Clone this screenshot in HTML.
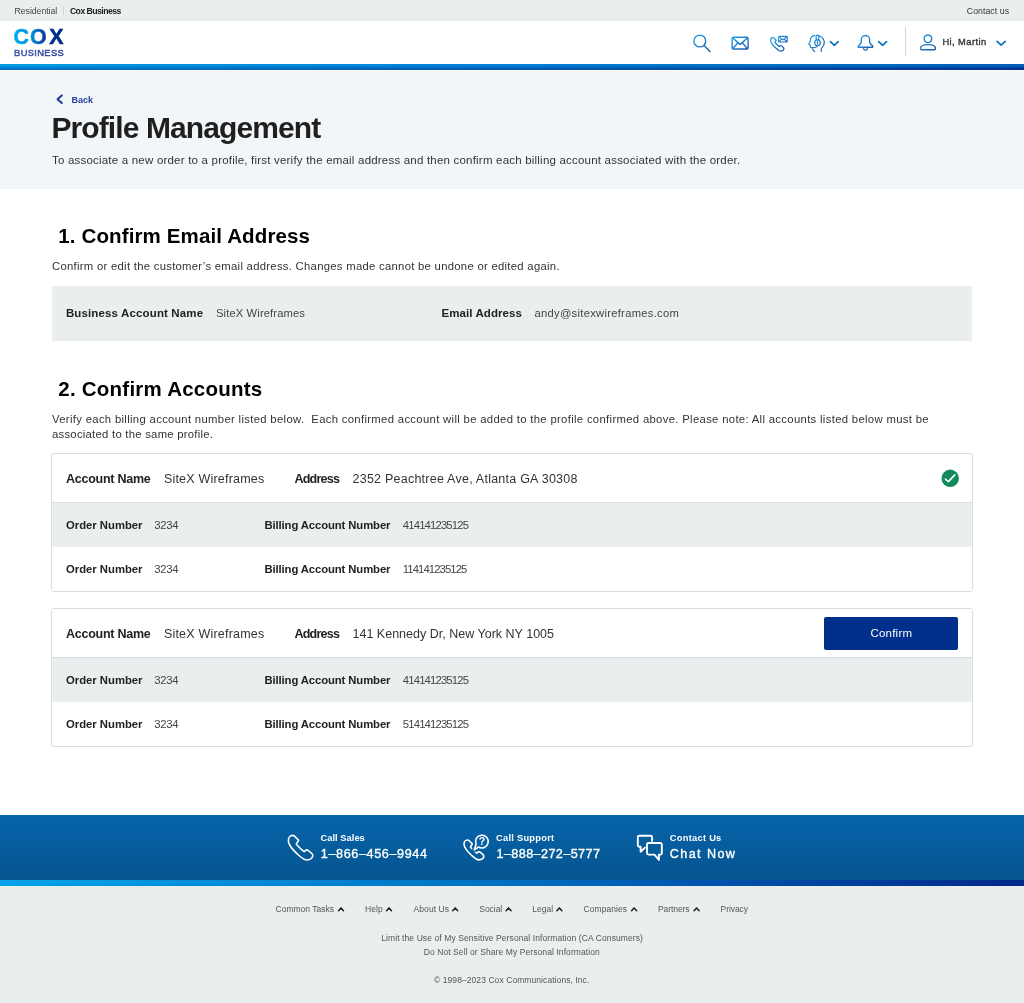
<!DOCTYPE html>
<html lang="en">
<head>
<meta charset="utf-8">
<title>Profile Management</title>
<style>
*{box-sizing:border-box;margin:0;padding:0}
html,body{width:1024px;height:1003px;overflow:hidden;background:#fff}
body{font-family:"Liberation Sans",sans-serif;color:#222;position:relative}
.t{position:absolute;white-space:nowrap;line-height:1}
#txt{position:absolute;left:0;top:0;width:1024px;height:1003px;will-change:transform}
.b{font-weight:bold}
.m{-webkit-text-stroke:.35px currentColor}
.abs{position:absolute}
#topbar{left:0;top:0;width:1024px;height:21.3px;background:#ebeeef}
#hdr{left:0;top:21px;width:1024px;height:43px;background:#fff}
#stripe1{left:0;top:64px;width:1024px;height:6px;background:linear-gradient(to right,#0071c9 0%,#0058ae 50%,#002c90 100%)}
#stripe1:before{content:"";position:absolute;left:0;top:0;width:100%;height:100%;background:linear-gradient(to right,#009ae4 0%,#0080d4 50%,#0060b8 100%);-webkit-mask-image:linear-gradient(to bottom,#000 0%,#000 25%,transparent 90%);mask-image:linear-gradient(to bottom,#000 0%,#000 25%,transparent 90%)}
#hero{left:0;top:71px;width:1024px;height:117.7px;background:#f3f6f9}
#box1{left:51.5px;top:286.3px;width:920.8px;height:54.9px;background:#ebeeef}
.card{left:51px;width:922px;height:139px;border:1px solid #d9dee3;border-radius:2.5px;background:#fff;overflow:hidden}
.card .hr{position:absolute;left:0;top:48px;width:100%;height:1px;background:#d9dee3}
.card .gr{position:absolute;left:0;top:49px;width:100%;height:44px;background:#ebeeef}
#fband{left:0;top:815px;width:1024px;height:65px;background:linear-gradient(to bottom,#0665ab,#05548e)}
#stripe2{left:0;top:880px;width:1024px;height:6.5px;background:linear-gradient(to right,#00a3ec 0%,#006fc2 50%,#00288a 100%)}
#foot{left:0;top:886px;width:1024px;height:117px;background:#ebeeef}
#btn{left:824px;top:617px;width:134.3px;height:32.5px;background:#00308c;border-radius:2px}
</style>
</head>
<body>
<div id="topbar" class="abs"></div>
<div id="hdr" class="abs"></div>
<div id="stripe1" class="abs"></div>
<div id="hero" class="abs"></div>
<div id="box1" class="abs"></div>
<div id="card1" class="abs card" style="top:453px"><div class="hr"></div><div class="gr"></div></div>
<div id="card2" class="abs card" style="top:608px"><div class="hr"></div><div class="gr"></div></div>
<div id="btn" class="abs"></div>
<div id="fband" class="abs"></div>
<div id="stripe2" class="abs"></div>
<div id="foot" class="abs"></div>
<svg class="abs" style="left:0;top:0;will-change:transform" width="1024" height="1003" viewBox="0 0 1024 1003" font-family="'Liberation Sans',sans-serif">
<defs>
<linearGradient id="lg" gradientUnits="userSpaceOnUse" x1="14" y1="0" x2="64" y2="0"><stop offset="0" stop-color="#00a9f0"/><stop offset=".33" stop-color="#0095df"/><stop offset=".62" stop-color="#0a3c9c"/><stop offset=".72" stop-color="#00308f"/><stop offset="1" stop-color="#00288a"/></linearGradient>
<linearGradient id="bg" gradientUnits="userSpaceOnUse" x1="14" y1="0" x2="64" y2="0"><stop offset="0" stop-color="#3b57aa"/><stop offset="1" stop-color="#2b3f98"/></linearGradient>
<linearGradient id="ig" gradientUnits="objectBoundingBox" x1="0" y1="0" x2="1" y2="1"><stop offset="0" stop-color="#1fa3e8"/><stop offset="1" stop-color="#1b55b0"/></linearGradient>
<path id="hs" d="M292.5 835.4C290 835.4 288.4 838 288.4 840.5C288.4 843 289 844 289.8 845.2C291 847 292 848.5 293.3 849.9C295 851.8 296.5 853.4 298.4 855C300 856.4 301.5 857.8 303.4 858.9C304.6 859.6 305.8 860 307 860C308.8 860 310.2 859.4 311.25 858.5C312.3 857.6 312.8 856.7 312.8 855.7C312.8 854.7 312.2 853.8 311.25 853L308.1 850.3C307.3 849.7 306.3 849.7 305.6 850.4L304.2 851.6C303.4 851 302.6 850.5 301.9 849.9C300 848.3 298.4 846.6 296.8 844.8C296.3 844.3 296.2 844 296.4 843.6L298.2 841.3C298.7 840.7 298.5 840 297.8 839.5L294.8 836.4C294.2 835.8 293.4 835.4 292.5 835.4Z"/>
</defs>
<!-- logo -->
<text x="13.4 29.9 49.2" y="44.1" font-size="21.4" font-weight="bold" fill="url(#lg)" stroke="url(#lg)" stroke-width=".5">COX</text>
<text x="14.1" y="56.4" font-size="9.3" fill="url(#bg)" stroke="url(#bg)" stroke-width=".45" textLength="49.6" lengthAdjust="spacing">BUSINESS</text>
<!-- topbar separator -->
<rect x="63" y="6" width="1" height="10" fill="#d3d8db"/>
<!-- header icons -->
<g fill="none" stroke="url(#ig)" stroke-width="1.4" stroke-linecap="round" stroke-linejoin="round">
<path d="M705.7 41a5.9 5.9 0 1 1 -11.8 0a5.9 5.9 0 1 1 11.8 0zM704.1 45.4L710 51.6"/>
<path d="M733.6 37.2h13a1.5 1.5 0 0 1 1.5 1.5v8.8a1.5 1.5 0 0 1 -1.5 1.5h-13a1.5 1.5 0 0 1 -1.5 -1.5v-8.8a1.5 1.5 0 0 1 1.5 -1.5zM732.8 38l7.3 6.4l7.3 -6.4M732.8 48.6l4.9 -5.6M747.4 48.6l-4.9 -5.6"/>
</g>
<g fill="none" stroke="url(#ig)" stroke-linecap="round" stroke-linejoin="round">
<use href="#hs" transform="translate(770.2 37.2) scale(.545) translate(-287.6 -834.6)" stroke-width="2.3"/>
<path d="M779.4 36.4h7a.8 .8 0 0 1 .8 .8v4a.8 .8 0 0 1 -.8 .8h-7a.8 .8 0 0 1 -.8 -.8v-4a.8 .8 0 0 1 .8 -.8zM779 36.9l3.9 3l3.9 -3M779 41.6l2.6 -2.4M786.8 41.6l-2.6 -2.4" stroke-width="1.1"/>
<!-- headset person -->
<path d="M814.600 35.400c-2.600 .7 -4.200 2.800 -4.200 5c0 .7 -.2 1.200 -.6 1.800l-.9 1.500c-.2 .4 0 .7 .4 .8l.9 .3v1.400c0 1 .7 1.500 1.600 1.500M812.300 48.800l2.300 2.800M820 36.200c2.600 1.200 4.300 3.600 4.300 6.400c0 2.200 -1 3.700 -2.100 4.800c-.7 .7 -1 1.300 -1 2.200v1.700M816.200 35.400h2.600v4.400h-2.600zM820.300 42.700a2.800 2.800 0 1 1 -5.600 0a2.800 2.800 0 1 1 5.600 0zM817.500 41.700v2M817.500 45.500c0 1.500 -2.300 2.200 -5.500 2.200" stroke-width="1.2"/>
<!-- bell -->
<path d="M858.700 47.200c-.7 0 -.8 -1 -.2 -1.500c1.600 -1.200 2.800 -2 2.800 -4v-2.100a4.150 4.150 0 0 1 8.300 0v2.100c0 2 1.200 2.800 2.800 4c.6 .5 .5 1.500 -.2 1.500zM863.500 48.600a2 2 0 0 0 3.900 0" stroke-width="1.4"/>
<!-- user -->
<path d="M931.700 38.800a3.800 3.800 0 1 1 -7.600 0a3.800 3.800 0 1 1 7.600 0zM920.500 48.400c0 -2.400 3 -3.800 7.500 -3.800s7.500 1.400 7.500 3.800c0 .8 -.5 1.400 -1.400 1.400h-12.200c-.9 0 -1.400 -.6 -1.400 -1.400z" stroke-width="1.4"/>
</g>
<g fill="none" stroke="#0b78b6" stroke-width="1.8" stroke-linecap="round" stroke-linejoin="round">
<path d="M830.400 41.700l3.900 3.600l3.900 -3.600M878.700 41.700l3.900 3.600l3.900 -3.600M997.100 41.400l4.050 3.700l4.050 -3.700"/>
</g>
<rect x="905" y="27" width="1" height="29.500" fill="#cfd8de"/>
<!-- back chevron -->
<path d="M61.800 95.400l-4.300 3.800l4.300 3.800" fill="none" stroke="#1c3a9c" stroke-width="2" stroke-linecap="round" stroke-linejoin="round"/>
<!-- check -->
<circle cx="950.200" cy="478.300" r="8.700" fill="#118a5c"/>
<path d="M945.500 479.100l2.900 2.500l6.400 -6.700" fill="none" stroke="#fff" stroke-width="1.700" stroke-linecap="round" stroke-linejoin="round"/>
<!-- footer icons -->
<g fill="none" stroke="#fff" stroke-linecap="round" stroke-linejoin="round">
<use href="#hs" stroke-width="1.600"/>
<use href="#hs" transform="translate(463.4 839.3) scale(.81) translate(-287.6 -834.6)" stroke-width="2"/>
<path d="M476.100 844.200A6.350 6.350 0 1 1 478.600 847L474.300 849.800Z" fill="#0661a5" stroke="#0661a5" stroke-width="4.500"/>
<path d="M476.100 844.200A6.350 6.350 0 1 1 478.600 847L474.300 849.800Z" fill="#0661a5" stroke-width="1.600"/>
<path d="M652.100 840.900V837.300a1.500 1.500 0 0 0 -1.500 -1.500H639.300a1.500 1.500 0 0 0 -1.500 1.500V845.300a1.500 1.500 0 0 0 1.500 1.500H640.600V851.800L645 847.600" stroke-width="1.900"/>
<path d="M648.500 843H660.300a1.500 1.500 0 0 1 1.500 1.500V853.100a1.500 1.500 0 0 1 -1.500 1.500H658.900V860L654.400 854.600H648.500a1.500 1.500 0 0 1 -1.500 -1.500V844.500a1.500 1.500 0 0 1 1.500 -1.500Z" stroke-width="1.900"/>
</g>
<text x="481.900" y="845.400" font-size="10.500" font-weight="bold" fill="#fff" text-anchor="middle">?</text>
<!-- footer carets -->
<g fill="none" stroke="#222" stroke-width="1.500" stroke-linecap="round" stroke-linejoin="round">
<path d="M338.500 910.700l2.500 -2.800l2.500 2.800M386.500 910.700l2.500 -2.800l2.500 2.800M452.700 910.700l2.500 -2.800l2.500 2.800M506.100 910.700l2.500 -2.800l2.500 2.800M556.900 910.700l2.500 -2.800l2.500 2.800M631.600 910.700l2.500 -2.800l2.500 2.800M694.100 910.700l2.500 -2.800l2.500 2.800"/>
</g>
</svg>

<div id="txt">
<div class="t" style="left:14.6px;top:6.8px;font-size:8.7px;letter-spacing:-0.038px;color:#444">Residential</div>
<div class="t b" style="left:69.9px;top:6.8px;font-size:8.7px;letter-spacing:-0.541px;color:#222">Cox Business</div>
<div class="t" style="left:966.8px;top:6.8px;font-size:8.7px;letter-spacing:0.074px;color:#333">Contact us</div>
<div class="t m" style="left:942.4px;top:38.0px;font-size:9.3px;letter-spacing:0.447px;color:#333">Hi, Martin</div>
<div class="t b" style="left:71.6px;top:95.9px;font-size:9px;letter-spacing:-0.005px;color:#24429e">Back</div>
<div class="t b" style="left:51.4px;top:113.1px;font-size:30px;letter-spacing:-0.892px;color:#1f1f1f">Profile Management</div>
<div class="t" style="left:52.0px;top:154.5px;font-size:11.5px;letter-spacing:0.204px;color:#333">To associate a new order to a profile, first verify the email address and then confirm each billing account associated with the order.</div>
<div class="t b" style="left:58.3px;top:226.2px;font-size:20.5px;letter-spacing:0.129px;color:#000">1. Confirm Email Address</div>
<div class="t" style="left:52.0px;top:261.4px;font-size:11.3px;letter-spacing:0.282px;color:#333">Confirm or edit the customer’s email address. Changes made cannot be undone or edited again.</div>
<div class="t b" style="left:65.9px;top:308.2px;font-size:11.5px;letter-spacing:0.139px;color:#222">Business Account Name</div>
<div class="t" style="left:216.0px;top:308.4px;font-size:11.2px;letter-spacing:0.125px;color:#444">SiteX Wireframes</div>
<div class="t b" style="left:441.5px;top:308.2px;font-size:11.5px;letter-spacing:0.078px;color:#222">Email Address</div>
<div class="t" style="left:534.5px;top:308.4px;font-size:11.2px;letter-spacing:0.292px;color:#444">andy@sitexwireframes.com</div>
<div class="t b" style="left:58.3px;top:378.9px;font-size:20.5px;letter-spacing:0.232px;color:#000">2. Confirm Accounts</div>
<div class="t" style="left:52.0px;top:414.1px;font-size:11.3px;letter-spacing:0.325px;color:#333">Verify each billing account number listed below.  Each confirmed account will be added to the profile confirmed above. Please note: All accounts listed below must be</div>
<div class="t" style="left:52.0px;top:429.4px;font-size:11.3px;letter-spacing:0.259px;color:#333">associated to the same profile.</div>
<div class="t b" style="left:66.0px;top:472.6px;font-size:12.5px;letter-spacing:-0.257px;color:#222">Account Name</div>
<div class="t" style="left:163.9px;top:472.6px;font-size:12.5px;letter-spacing:0.203px;color:#333">SiteX Wireframes</div>
<div class="t b" style="left:294.4px;top:472.6px;font-size:12.5px;letter-spacing:-0.755px;color:#222">Address</div>
<div class="t" style="left:352.5px;top:472.6px;font-size:12.5px;letter-spacing:0.237px;color:#333">2352 Peachtree Ave, Atlanta GA 30308</div>
<div class="t b" style="left:66.0px;top:520.1px;font-size:11.3px;letter-spacing:-0.009px;color:#222">Order Number</div>
<div class="t" style="left:154.3px;top:520.1px;font-size:11.3px;letter-spacing:-0.280px;color:#444">3234</div>
<div class="t b" style="left:264.4px;top:520.1px;font-size:11.3px;letter-spacing:-0.102px;color:#222">Billing Account Number</div>
<div class="t" style="left:402.8px;top:520.1px;font-size:11.3px;letter-spacing:-0.837px;color:#444">414141235125</div>
<div class="t b" style="left:66.0px;top:564.4px;font-size:11.3px;letter-spacing:-0.009px;color:#222">Order Number</div>
<div class="t" style="left:154.3px;top:564.4px;font-size:11.3px;letter-spacing:-0.280px;color:#444">3234</div>
<div class="t b" style="left:264.4px;top:564.4px;font-size:11.3px;letter-spacing:-0.102px;color:#222">Billing Account Number</div>
<div class="t" style="left:402.8px;top:564.4px;font-size:11.3px;letter-spacing:-0.906px;color:#444">114141235125</div>
<div class="t b" style="left:66.0px;top:627.6px;font-size:12.5px;letter-spacing:-0.257px;color:#222">Account Name</div>
<div class="t" style="left:163.9px;top:627.6px;font-size:12.5px;letter-spacing:0.203px;color:#333">SiteX Wireframes</div>
<div class="t b" style="left:294.4px;top:627.6px;font-size:12.5px;letter-spacing:-0.755px;color:#222">Address</div>
<div class="t" style="left:352.5px;top:627.6px;font-size:12.5px;letter-spacing:0.007px;color:#333">141 Kennedy Dr, New York NY 1005</div>
<div class="t b" style="left:66.0px;top:675.1px;font-size:11.3px;letter-spacing:-0.009px;color:#222">Order Number</div>
<div class="t" style="left:154.3px;top:675.1px;font-size:11.3px;letter-spacing:-0.280px;color:#444">3234</div>
<div class="t b" style="left:264.4px;top:675.1px;font-size:11.3px;letter-spacing:-0.102px;color:#222">Billing Account Number</div>
<div class="t" style="left:402.8px;top:675.1px;font-size:11.3px;letter-spacing:-0.837px;color:#444">414141235125</div>
<div class="t b" style="left:66.0px;top:719.4px;font-size:11.3px;letter-spacing:-0.009px;color:#222">Order Number</div>
<div class="t" style="left:154.3px;top:719.4px;font-size:11.3px;letter-spacing:-0.280px;color:#444">3234</div>
<div class="t b" style="left:264.4px;top:719.4px;font-size:11.3px;letter-spacing:-0.102px;color:#222">Billing Account Number</div>
<div class="t" style="left:402.8px;top:719.4px;font-size:11.3px;letter-spacing:-0.837px;color:#444">514141235125</div>
<div class="t" style="left:870.5px;top:627.8px;font-size:11.5px;letter-spacing:0.206px;color:#fff">Confirm</div>
<div class="t b" style="left:320.5px;top:834.2px;font-size:9.3px;letter-spacing:0.040px;color:#fff">Call Sales</div>
<div class="t m" style="left:320.8px;top:848.3px;font-size:12.6px;letter-spacing:0.626px;color:#fff">1–866–456–9944</div>
<div class="t b" style="left:496.1px;top:834.2px;font-size:9.3px;letter-spacing:0.249px;color:#fff">Call Support</div>
<div class="t m" style="left:496.5px;top:848.3px;font-size:12.6px;letter-spacing:0.411px;color:#fff">1–888–272–5777</div>
<div class="t b" style="left:669.8px;top:834.2px;font-size:9.3px;letter-spacing:0.269px;color:#fff">Contact Us</div>
<div class="t m" style="left:669.8px;top:848.3px;font-size:12.6px;letter-spacing:1.400px;color:#fff">Chat Now</div>
<div class="t" style="left:275.6px;top:905.3px;font-size:8.5px;letter-spacing:-0.002px;color:#555">Common Tasks</div>
<div class="t" style="left:365.0px;top:905.3px;font-size:8.5px;letter-spacing:0.105px;color:#555">Help</div>
<div class="t" style="left:413.5px;top:905.3px;font-size:8.5px;letter-spacing:0.090px;color:#555">About Us</div>
<div class="t" style="left:479.3px;top:905.3px;font-size:8.5px;letter-spacing:-0.051px;color:#555">Social</div>
<div class="t" style="left:532.2px;top:905.3px;font-size:8.5px;letter-spacing:0.047px;color:#555">Legal</div>
<div class="t" style="left:583.5px;top:905.3px;font-size:8.5px;letter-spacing:0.075px;color:#555">Companies</div>
<div class="t" style="left:657.9px;top:905.3px;font-size:8.5px;letter-spacing:-0.061px;color:#555">Partners</div>
<div class="t" style="left:720.6px;top:905.3px;font-size:8.5px;letter-spacing:-0.079px;color:#555">Privacy</div>
<div class="t" style="left:381.2px;top:934.1px;font-size:8.5px;letter-spacing:0.096px;color:#555">Limit the Use of My Sensitive Personal Information (CA Consumers)</div>
<div class="t" style="left:423.7px;top:948.2px;font-size:8.5px;letter-spacing:0.085px;color:#555">Do Not Sell or Share My Personal Information</div>
<div class="t" style="left:434.0px;top:976.3px;font-size:8.5px;letter-spacing:0.073px;color:#555">© 1998–2023 Cox Communications, Inc.</div>
</div>
</body>
</html>
